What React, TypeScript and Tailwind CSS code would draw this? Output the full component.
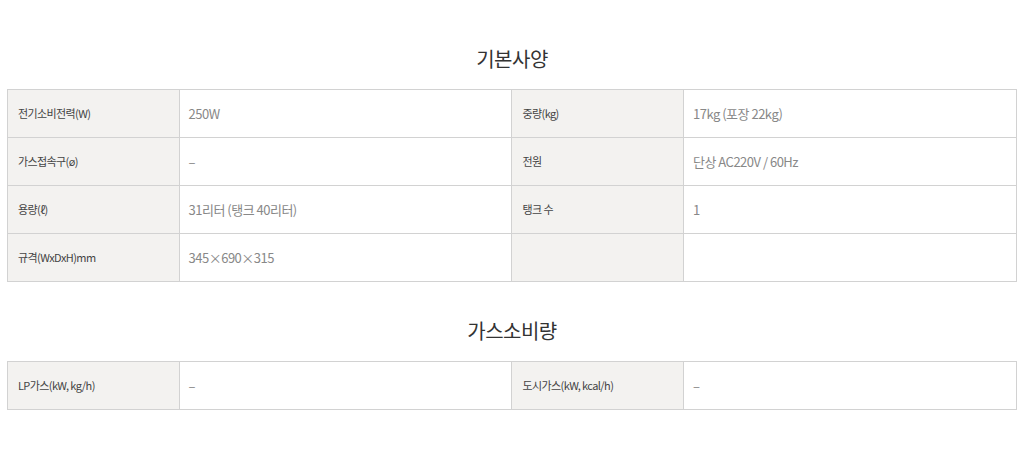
const specRows: [string, string, string, string][] = [
  ['전기소비전력(W)', '250W', '중량(kg)', '17kg (포장 22kg)'],
  ['가스접속구(ø)', '–', '전원', '단상 AC220V / 60Hz'],
  ['용량(ℓ)', '31리터 (탱크 40리터)', '탱크 수', '1'],
  ['규격(WxDxH)mm', '345×690×315', '', ''],
]

const gasRows: [string, string, string, string][] = [
  ['LP가스(kW, kg/h)', '–', '도시가스(kW, kcal/h)', '–'],
]

function SpecTable({ rows }: { rows: [string, string, string, string][] }) {
  return (
    <table className="w-full table-fixed border-collapse border border-[#d2d2d2]">
      <colgroup>
        <col className="w-[17%]" />
        <col className="w-[33%]" />
        <col className="w-[17%]" />
        <col className="w-[33%]" />
      </colgroup>
      <tbody>
        {rows.map((r, i) => (
          <tr key={i} className="h-[48px]">
            <th className="border border-[#d2d2d2] bg-[#f3f2f0] px-[10px] text-left align-middle text-[11px] font-normal tracking-[-0.6px] text-[#444]">
              {r[0]}
            </th>
            <td className="border border-[#d2d2d2] px-[9px] align-middle text-[13px] tracking-[-0.5px] text-[#888]">
              {r[1]}
            </td>
            <th className="border border-[#d2d2d2] bg-[#f3f2f0] px-[10px] text-left align-middle text-[11px] font-normal tracking-[-0.6px] text-[#444]">
              {r[2]}
            </th>
            <td className="border border-[#d2d2d2] px-[9px] align-middle text-[13px] tracking-[-0.5px] text-[#888]">
              {r[3]}
            </td>
          </tr>
        ))}
      </tbody>
    </table>
  )
}

export default function App() {
  return (
    <div
      className="min-h-[463px] bg-white px-[7px] pt-[44px]"
      style={{ fontFamily: '"Noto Sans CJK KR", "Noto Sans", sans-serif' }}
    >
      {/* 기본사양 */}
      <h2 className="mb-[15px] h-[30px] text-center text-[20px] leading-[30px] font-normal tracking-[-0.5px] text-[#333]">
        기본사양
      </h2>
      <SpecTable rows={specRows} />

      {/* 가스소비량 */}
      <h2 className="mt-[34px] mb-[15px] h-[30px] text-center text-[20px] leading-[30px] font-normal tracking-[-0.5px] text-[#333]">
        가스소비량
      </h2>
      <SpecTable rows={gasRows} />
    </div>
  )
}
